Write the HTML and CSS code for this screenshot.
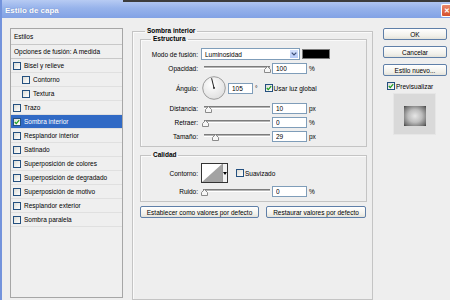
FILE: index.html
```html
<!DOCTYPE html>
<html lang="es">
<head>
    <meta charset="UTF-8">
    <meta name="viewport" content="width=device-width, initial-scale=1.0">
    <title>Estilo de capa</title>
    <link rel="stylesheet" href="styles.css">
</head>
<body>
    <div class="dialog">
        <div class="titlebar">
            <span class="title">Estilo de capa</span>
            <span class="close-btn">&#10005;</span>
        </div>

        <div class="dialog-body">
            <!-- Lista de estilos -->
            <ul class="style-list">
                <li class="list-header">Estilos</li>
                <li class="list-blend">Opciones de fusión: A medida</li>
                <li><span class="check"></span>Bisel y relieve</li>
                <li class="sub"><span class="check"></span>Contorno</li>
                <li class="sub"><span class="check"></span>Textura</li>
                <li><span class="check"></span>Trazo</li>
                <li class="selected"><span class="check"><svg width="6" height="6" viewBox="0 0 6 6"><path d="M0.8 3L2.3 4.6L5.2 1.2" fill="none" stroke="#21a121" stroke-width="1.3"/></svg></span>Sombra interior</li>
                <li><span class="check"></span>Resplandor interior</li>
                <li><span class="check"></span>Satinado</li>
                <li><span class="check"></span>Superposición de colores</li>
                <li><span class="check"></span>Superposición de degradado</li>
                <li><span class="check"></span>Superposición de motivo</li>
                <li><span class="check"></span>Resplandor exterior</li>
                <li><span class="check"></span>Sombra paralela</li>
            </ul>

            <!-- Panel central -->
            <div class="pane">
                <fieldset class="group outer">
                    <legend>Sombra interior</legend>

                    <fieldset class="group">
                        <legend>Estructura</legend>

                        <div class="row row-mode">
                            <label>Modo de fusión:</label>
                            <div class="select">
                                <span class="select-value">Luminosidad</span>
                                <span class="select-arrow"><svg width="6" height="4" viewBox="0 0 6 4"><path d="M0.7 0.7L3 3L5.3 0.7" fill="none" stroke="#3d4f78" stroke-width="1.2"/></svg></span>
                            </div>
                            <span class="swatch"></span>
                        </div>

                        <div class="row">
                            <label>Opacidad:</label>
                            <div class="slider">
                                <span class="track"></span>
                                <svg class="thumb" style="--v: 1" width="7" height="7" viewBox="0 0 7 7"><path d="M0.5 6.5V3.5L3.5 0.5L6.5 3.5V6.5Z" fill="#f6f6f6" stroke="#8a8a8a"/></svg>
                            </div>
                            <input class="field" type="text" value="100">
                            <span class="unit">%</span>
                        </div>

                        <div class="row row-angle">
                            <label>Ángulo:</label>
                            <svg class="dial" width="24" height="24" viewBox="0 0 24 24">
                                <defs>
                                    <radialGradient id="dialFill" cx="40%" cy="35%" r="70%">
                                        <stop offset="0" stop-color="#ffffff"/>
                                        <stop offset="1" stop-color="#dedede"/>
                                    </radialGradient>
                                </defs>
                                <circle cx="12" cy="12" r="11.3" fill="url(#dialFill)" stroke="#9c9c9c"/>
                                <line x1="12" y1="12" x2="9.6" y2="2.2" stroke="#222" stroke-width="1"/>
                                <circle cx="12" cy="12" r="0.9" fill="#222"/>
                            </svg>
                            <input class="field field-angle" type="text" value="105">
                            <span class="unit">°</span>
                            <span class="check checkbox-global"><svg width="6" height="6" viewBox="0 0 6 6"><path d="M0.8 3L2.3 4.6L5.2 1.2" fill="none" stroke="#21a121" stroke-width="1.3"/></svg></span>
                            <span class="check-label">Usar luz global</span>
                        </div>

                        <div class="row">
                            <label>Distancia:</label>
                            <div class="slider">
                                <span class="track"></span>
                                <svg class="thumb" style="--v: 0.05" width="7" height="7" viewBox="0 0 7 7"><path d="M0.5 6.5V3.5L3.5 0.5L6.5 3.5V6.5Z" fill="#f6f6f6" stroke="#8a8a8a"/></svg>
                            </div>
                            <input class="field" type="text" value="10">
                            <span class="unit">px</span>
                        </div>

                        <div class="row">
                            <label>Retraer:</label>
                            <div class="slider">
                                <span class="track"></span>
                                <svg class="thumb" style="--v: 0" width="7" height="7" viewBox="0 0 7 7"><path d="M0.5 6.5V3.5L3.5 0.5L6.5 3.5V6.5Z" fill="#f6f6f6" stroke="#8a8a8a"/></svg>
                            </div>
                            <input class="field" type="text" value="0">
                            <span class="unit">%</span>
                        </div>

                        <div class="row">
                            <label>Tamaño:</label>
                            <div class="slider">
                                <span class="track"></span>
                                <svg class="thumb" style="--v: 0.16" width="7" height="7" viewBox="0 0 7 7"><path d="M0.5 6.5V3.5L3.5 0.5L6.5 3.5V6.5Z" fill="#f6f6f6" stroke="#8a8a8a"/></svg>
                            </div>
                            <input class="field" type="text" value="29">
                            <span class="unit">px</span>
                        </div>
                    </fieldset>

                    <fieldset class="group quality">
                        <legend>Calidad</legend>

                        <div class="row row-contour">
                            <label>Contorno:</label>
                            <div class="contour">
                                <svg width="20" height="18" viewBox="0 0 20 18"><rect width="20" height="18" fill="#ffffff"/><path d="M0 18L20 0V18Z" fill="#a3a3a3"/></svg>
                                <span class="contour-arrow"><svg width="4" height="3" viewBox="0 0 4 3"><path d="M0 0H4L2 3Z" fill="#000"/></svg></span>
                            </div>
                            <span class="check checkbox-smooth"></span>
                            <span class="check-label">Suavizado</span>
                        </div>

                        <div class="row">
                            <label>Ruido:</label>
                            <div class="slider slider-noise">
                                <span class="track"></span>
                                <svg class="thumb" style="--v: 0" width="7" height="7" viewBox="0 0 7 7"><path d="M0.5 6.5V3.5L3.5 0.5L6.5 3.5V6.5Z" fill="#f6f6f6" stroke="#8a8a8a"/></svg>
                            </div>
                            <input class="field" type="text" value="0">
                            <span class="unit">%</span>
                        </div>
                    </fieldset>

                    <div class="default-buttons">
                        <button class="btn btn-set">Establecer como valores por defecto</button>
                        <button class="btn btn-reset">Restaurar valores por defecto</button>
                    </div>
                </fieldset>
            </div>

            <!-- Botones de la derecha -->
            <div class="actions">
                <button class="btn">OK</button>
                <button class="btn">Cancelar</button>
                <button class="btn">Estilo nuevo...</button>
                <div class="preview-toggle">
                    <span class="check"><svg width="6" height="6" viewBox="0 0 6 6"><path d="M0.8 3L2.3 4.6L5.2 1.2" fill="none" stroke="#21a121" stroke-width="1.3"/></svg></span>
                    <span class="check-label">Previsualizar</span>
                </div>
                <div class="preview">
                    <div class="preview-swatch"></div>
                </div>
            </div>
        </div>
    </div>
</body>
</html>
```

FILE: styles.css
```css
* {
    box-sizing: border-box;
}

body {
    margin: 0;
    width: 450px;
    height: 300px;
    overflow: hidden;
    font-family: "Liberation Sans", Arial, sans-serif;
    font-size: 6.5px;
    color: #000;
    background-color: #eeeeee;
}

.dialog {
    height: 300px;
    border-left: 2px solid #7393dc;
    display: flex;
    flex-direction: column;
    position: relative;
    overflow: hidden;
}

/* Barra de titulo */
.titlebar {
    height: 18px;
    flex-shrink: 0;
    background: linear-gradient(#b7cbf3, #97b3eb 45%, #82a2e5);
    display: flex;
    align-items: flex-end;
    justify-content: space-between;
    padding: 0 0 1px 3px;
    position: relative;
}

.titlebar::before {
    content: "";
    position: absolute;
    top: 0;
    left: 121px;
    right: 0;
    height: 2px;
    background-color: #3c3c3c;
}

.title {
    color: #fff;
    font-weight: bold;
    font-size: 8px;
    line-height: 10px;
    padding-bottom: 1px;
    text-shadow: 0 0 1px rgba(40, 70, 140, 0.5);
}

.close-btn {
    width: 9px;
    height: 13px;
    border-radius: 2px 0 0 2px;
    background: linear-gradient(#e9876b, #d5502c);
    border: 1px solid #fff;
    border-right: none;
    color: #fff;
    font-size: 7px;
    font-weight: bold;
    display: flex;
    align-items: center;
    justify-content: center;
    padding-left: 1px;
}

.dialog-body {
    flex: 1;
    display: flex;
    align-items: flex-start;
    padding: 9px 0 0 8px;
    min-height: 0;
}

/* Lista de estilos */
.style-list {
    list-style: none;
    margin: 1px 0 0 0;
    padding: 0;
    width: 113px;
    height: 270px;
    flex-shrink: 0;
    border: 1px solid #a6a6a6;
    background-color: #efefef;
}

.style-list li {
    height: 14px;
    display: flex;
    align-items: center;
    gap: 3px;
    padding-left: 2px;
    border-bottom: 1px solid #e0e0e0;
    white-space: nowrap;
}

.style-list .list-header {
    height: 16px;
    padding-left: 3px;
    border-bottom: 1px solid #c8c8c8;
}

.style-list .list-blend {
    padding-left: 3px;
    border-bottom: 1px solid #c8c8c8;
}

.style-list .sub {
    padding-left: 11px;
}

.style-list .selected {
    background-color: #316ac5;
    color: #fff;
}

.check {
    width: 8px;
    height: 8px;
    flex-shrink: 0;
    border: 1px solid #24507f;
    background: linear-gradient(135deg, #dcdcd6, #ffffff);
    display: inline-flex;
    align-items: center;
    justify-content: center;
}

.check svg {
    display: block;
}

/* Panel central */
.pane {
    width: 241px;
    margin-left: 9px;
    flex-shrink: 0;
}

.group {
    margin: 0;
    padding: 0;
    min-width: 0;
    border: 1px solid #c4c4c4;
    box-shadow: inset 1px 1px #fafafa;
}

.group legend {
    font-weight: bold;
    line-height: 8px;
    padding: 0 2px;
    margin-left: 10px;
}

.outer {
    height: 273px;
    padding: 0 5px 0 7px;
}

.outer > legend {
    margin-left: 5px;
}

.group .group {
    padding: 5px 0 4px 0;
}

.quality {
    margin-top: 4px;
}

.group .quality {
    padding-top: 4px;
}

.row {
    display: flex;
    align-items: center;
    height: 11px;
    margin-top: 3px;
}

.row:first-of-type {
    margin-top: 0;
}

.row label {
    width: 57px;
    text-align: right;
    flex-shrink: 0;
    margin-right: 3px;
}

.row-mode {
    height: 12px;
}

.row-angle {
    height: 24px;
    margin-top: 2px;
}

.row-contour {
    height: 20px;
}

.select {
    width: 99px;
    height: 12px;
    border: 1px solid #7f9db9;
    background-color: #fff;
    display: flex;
    align-items: stretch;
}

.select-value {
    flex: 1;
    display: flex;
    align-items: center;
    padding-left: 3px;
}

.select-arrow {
    width: 10px;
    background: linear-gradient(#d4e1fc, #b3c9f7);
    border: 1px solid #fff;
    display: flex;
    align-items: center;
    justify-content: center;
}

.swatch {
    width: 28px;
    height: 10px;
    margin-left: 2px;
    background-color: #000;
    border: 1px solid #7a7a7a;
}

.slider {
    position: relative;
    width: 69px;
    height: 11px;
    margin-left: 1px;
}

.slider-noise {
    margin-left: 0;
    width: 70px;
}

.track {
    position: absolute;
    left: 2px;
    right: 1px;
    top: 3px;
    height: 3px;
    background: linear-gradient(#7c7c7c 0 1px, #b4b4b4 1px 2px, #ffffff 2px);
}

.thumb {
    position: absolute;
    top: 3px;
    left: calc((100% - 7px) * var(--v));
}

.field {
    width: 35px;
    height: 11px;
    margin: 0 0 0 1px;
    padding: 0 0 0 3px;
    border: 1px solid #7f9db9;
    background-color: #fff;
    font: inherit;
    color: #000;
    outline: none;
}

.unit {
    margin-left: 2px;
}

.dial {
    flex-shrink: 0;
    margin-left: 1px;
}

.field-angle {
    width: 25px;
    margin-left: 2px;
}

.checkbox-global {
    margin-left: 7px;
}

.check-label {
    margin-left: 1px;
    white-space: nowrap;
}

.contour {
    width: 27px;
    height: 20px;
    border: 1px solid #333;
    display: flex;
    background-color: #fff;
}

.contour > svg {
    display: block;
}

.contour-arrow {
    flex: 1;
    display: flex;
    align-items: center;
    justify-content: center;
    border-left: 1px solid #9a9a9a;
    background-color: #f3f3f3;
}

.checkbox-smooth {
    margin-left: 8px;
}

/* Botones */
.btn {
    height: 12px;
    padding: 0;
    border: 1px solid #5f7fa8;
    border-radius: 2px;
    background: linear-gradient(#ffffff, #f1f0ea 70%, #e3e2da);
    font: inherit;
    color: #000;
    text-align: center;
    white-space: nowrap;
}

.default-buttons {
    display: flex;
    gap: 7px;
    margin-top: 4px;
}

.btn-set {
    width: 119px;
}

.btn-reset {
    width: 100px;
}

/* Columna derecha */
.actions {
    width: 64px;
    margin: 1px 0 0 10px;
    display: flex;
    flex-direction: column;
    gap: 6px;
    flex-shrink: 0;
}

.preview-toggle {
    display: flex;
    align-items: center;
    height: 8px;
    padding-left: 4px;
}

.preview {
    width: 43px;
    height: 42px;
    margin: -3px 0 0 10px;
    background-color: #d9d9d9;
    border: 1px solid #e6e6e6;
    display: flex;
    align-items: center;
    justify-content: center;
    padding-top: 3px;
}

.preview-swatch {
    width: 22px;
    height: 20px;
    background: radial-gradient(ellipse at center, #e6e6e6 0%, #bdbdbd 45%, #6e6e6e 85%, #3a3a3a 100%);
}
```
